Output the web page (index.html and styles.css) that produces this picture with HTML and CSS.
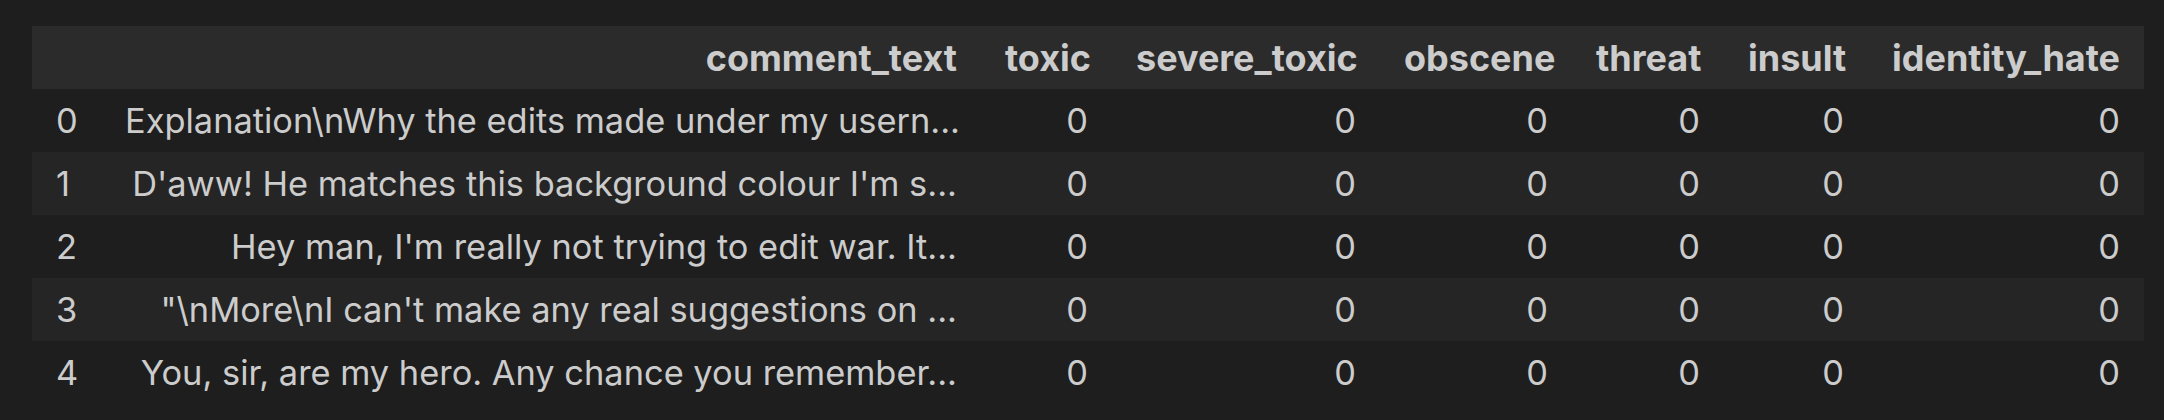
FILE: index.html
```html
<!DOCTYPE html>
<html lang="en">
<head>
    <meta charset="UTF-8">
    <meta name="viewport" content="width=device-width, initial-scale=1.0">
    <title>DataFrame Output</title>
    <link rel="stylesheet" href="styles.css">
</head>
<body>
    <div class="output">
        <table class="dataframe">
            <colgroup>
                <col class="col-index">
                <col class="col-comment">
                <col class="col-toxic">
                <col class="col-severe">
                <col class="col-obscene">
                <col class="col-threat">
                <col class="col-insult">
                <col class="col-identity">
            </colgroup>
            <thead>
                <tr>
                    <th></th>
                    <th>comment_text</th>
                    <th>toxic</th>
                    <th>severe_toxic</th>
                    <th>obscene</th>
                    <th>threat</th>
                    <th>insult</th>
                    <th>identity_hate</th>
                </tr>
            </thead>
            <tbody>
                <tr>
                    <th>0</th>
                    <td>Explanation\nWhy the edits made under my usern...</td>
                    <td>0</td><td>0</td><td>0</td><td>0</td><td>0</td><td>0</td>
                </tr>
                <tr>
                    <th>1</th>
                    <td>D'aww! He matches this background colour I'm s...</td>
                    <td>0</td><td>0</td><td>0</td><td>0</td><td>0</td><td>0</td>
                </tr>
                <tr>
                    <th>2</th>
                    <td>Hey man, I'm really not trying to edit war. It...</td>
                    <td>0</td><td>0</td><td>0</td><td>0</td><td>0</td><td>0</td>
                </tr>
                <tr>
                    <th>3</th>
                    <td>"\nMore\nI can't make any real suggestions on ...</td>
                    <td>0</td><td>0</td><td>0</td><td>0</td><td>0</td><td>0</td>
                </tr>
                <tr>
                    <th>4</th>
                    <td>You, sir, are my hero. Any chance you remember...</td>
                    <td>0</td><td>0</td><td>0</td><td>0</td><td>0</td><td>0</td>
                </tr>
            </tbody>
        </table>
    </div>
</body>
</html>
```

FILE: styles.css
```css
body {
    margin: 0;
    background-color: #1e1e1e;
    color: #cccccc;
    font-family: Inter, "Noto Sans", sans-serif;
}
.output {
    padding: 26px 0 0 32px;
}
.dataframe {
    table-layout: fixed;
    width: 2112px;
    border-collapse: collapse;
    font-size: 34.4px;
}
.col-index { width: 69px; }
.col-comment { width: 880px; }
.col-toxic { width: 131px; }
.col-severe { width: 268px; }
.col-obscene { width: 192px; }
.col-threat { width: 152px; }
.col-insult { width: 144px; }
.col-identity { width: 276px; }

.dataframe th,
.dataframe td {
    height: 63px;
    padding: 0 24px;
    text-align: right;
    white-space: nowrap;
    vertical-align: middle;
}
.dataframe thead tr {
    background-color: #2b2b2b;
}
.dataframe thead th {
    font-size: 36px;
    font-weight: 700;
}
.dataframe tbody th {
    font-weight: 400;
    text-align: left;
}
.dataframe tbody tr:nth-child(even) {
    background-color: #252525;
}
```
